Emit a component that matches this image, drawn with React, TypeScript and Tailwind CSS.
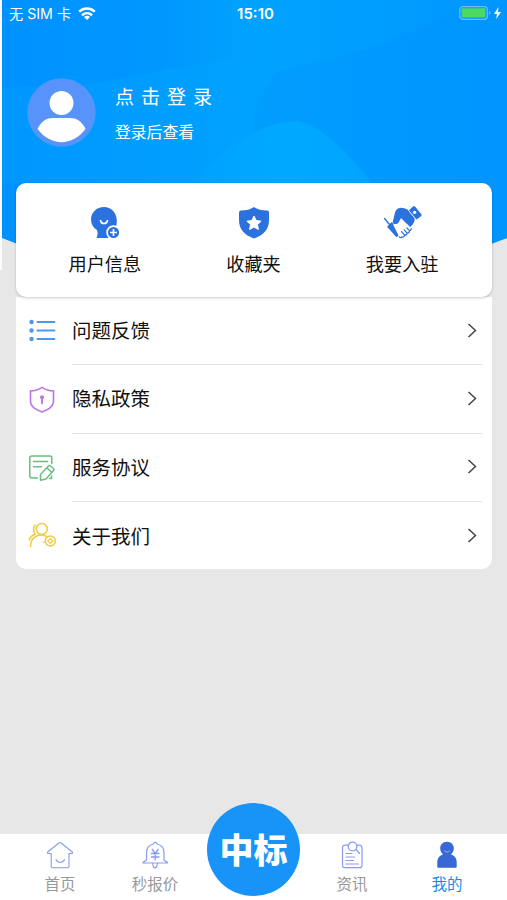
import React from 'react';

const menuItems = [
  { label: '问题反馈', icon: <ListIcon /> },
  { label: '隐私政策', icon: <PrivacyIcon /> },
  { label: '服务协议', icon: <AgreementIcon /> },
  { label: '关于我们', icon: <AboutIcon /> },
];

const shortcuts = [
  { label: '用户信息', icon: <UserInfoIcon /> },
  { label: '收藏夹', icon: <FavoriteIcon /> },
  { label: '我要入驻', icon: <HandshakeIcon /> },
];

function UserInfoIcon() {
  return (
    <svg className="h-9 w-10" viewBox="0 0 40 36">
      <path
        d="M19 3C11.500 3 6 8.500 6 15.500c0 4.500 2 8 6 10.500.900 2.500.900 5-.500 8h17V27c2.500-2 3.700-7 3.200-12C31 8 26 3 19 3Z"
        fill="#2b72df"
      />
      <path d="M15.500 16.500c.700 4 6.300 4 7 0" fill="none" stroke="#fff" strokeWidth="1.600" strokeLinecap="round" />
      <circle cx="28.500" cy="28.500" r="6.400" fill="#2b72df" stroke="#fff" strokeWidth="1.700" />
      <path d="M28.500 25v7M25 28.500h7" stroke="#fff" strokeWidth="1.700" />
    </svg>
  );
}

function FavoriteIcon() {
  return (
    <svg className="h-9 w-10" viewBox="0 0 40 36">
      <path
        d="M20 3q5 3.500 13 3.500 2 0 2 2V16c0 9-5 15-15 18.500C10 31 5 25 5 16V8.500q0-2 2-2Q15 6.500 20 3Z"
        fill="#2b72df"
      />
      <path
        d="m20 12 2.200 4.500 4.900.700-3.600 3.400.900 4.900-4.400-2.400-4.400 2.400.900-4.900-3.600-3.400 4.900-.700Z"
        fill="#fff"
        stroke="#fff"
        strokeLinejoin="round"
      />
    </svg>
  );
}

function HandshakeIcon() {
  return (
    <svg className="h-9 w-10" viewBox="0 0 40 36">
      <path d="m2.500 14.500 5 6" stroke="#2b72df" strokeWidth="1.400" strokeLinecap="round" />
      <path d="m5 22.700 4.800-4.700 9.200 11.500-4.500 3.700Z" fill="#2b72df" />
      {/* Upper hand with its cuff */}
      <path
        d="M10.800 17.500 13.200 8q1.300-3.800 5.300-4.300 4 0 7.500 2l6.800 8.500q0 5-4.800 9l-9-9-2.500 4.500q-2.500 2.500-4.500 1.300Q10.500 19.300 10.800 17.500Z"
        fill="#2b72df"
      />
      <path d="m26.700 6.500 4.300-4q1.200-1 2.200.200l6 7.300q1 1.200-.200 2.200l-4.800 3.600Z" fill="#2b72df" />
      <path d="m26.500 6.300 7.900 9.700" stroke="#fff" strokeWidth=".9" />
      <circle cx="32.600" cy="8.300" r="1.600" fill="#fff" />
      {/* Lower hand, fingers curled along the bottom */}
      <path
        d="m11 20.500 5.200-.800 3-5.300 10.300 10q.500 2.300-2 2.700 0 2.200-2.400 2.300-.200 2-2.400 2-.5 2.200-2.700 1.900-1.500 1-2.700-.300Z"
        fill="#fff"
      />
      <path
        d="m17.300 33 .300.300q1.500.800 2.400-.300 2.200.300 2.700-1.900 2.200 0 2.400-2 2.400-.100 2.400-2.300 2-.600 1.700-2.300M24.800 23.800l2.400 2.600M22.200 25.800l2.500 2.900M19.500 27.700l2.700 3"
        fill="none"
        stroke="#2b72df"
        strokeWidth="1.200"
        strokeLinecap="round"
      />
    </svg>
  );
}

function ListIcon() {
  return (
    <svg className="h-7 w-7" viewBox="0 0 28 28" fill="#4d97ed">
      <circle cx="3.500" cy="5" r="2.200" />
      <circle cx="3.500" cy="13.500" r="2.200" />
      <circle cx="3.500" cy="22" r="2.200" />
      <path d="M9.500 5h17M9.500 13.500h17M9.500 22h17" stroke="#4d97ed" strokeWidth="1.900" strokeLinecap="round" />
    </svg>
  );
}

function PrivacyIcon() {
  return (
    <svg className="h-7 w-7" viewBox="0 0 28 28" fill="none" stroke="#bd75e3" strokeWidth="1.600" strokeLinejoin="round">
      <path d="M14 1.300c3.500 2.400 7 3.500 11.500 3.500v10.700c0 5-4.500 8-11.500 10.500-7-2.500-11.500-5.500-11.500-10.500V4.800C7 4.800 10.500 3.700 14 1.300Z" />
      <circle cx="14" cy="11.200" r="2" fill="#bd75e3" stroke="none" />
      <path d="M14 12v5.300" strokeWidth="1.900" strokeLinecap="round" />
    </svg>
  );
}

function AgreementIcon() {
  return (
    <svg
      className="h-7 w-7"
      viewBox="0 0 28 28"
      fill="none"
      stroke="#66c07d"
      strokeWidth="1.500"
      strokeLinecap="round"
      strokeLinejoin="round"
    >
      <path d="M9.500 24H3.800q-2 0-2-2V4q0-2 2-2h18q2 0 2 2v5.500M5.500 7.500h14M5.500 12.800h8" />
      <path d="m12.500 20.500 8-8.500q1-1 2 0l3 2.500q1 1 0 2l-7.500 8.500-5.500 1.200ZM19 14l4.500 4M21.500 24.500h2v-2.500" />
    </svg>
  );
}

function AboutIcon() {
  return (
    <svg className="h-7 w-7" viewBox="0 0 28 28" fill="none" stroke="#efcb43" strokeWidth="1.500" strokeLinecap="round">
      <circle cx="13.800" cy="7" r="5.500" />
      <path d="M7 3c-2 3-1.500 6.500 0 9-3 1.500-5 3.500-5.800 6M2.500 24.500c0-6 3.500-10 8-11.300 3.500-.800 6 0 8 1.300" />
      <circle cx="22.300" cy="19" r="5" />
      <path d="m22.300 16.500 2.500 2.500-2.500 2.500-2.500-2.500ZM17 20h-2" strokeWidth="1.200" />
    </svg>
  );
}

function HomeIcon() {
  return (
    <svg className="h-7 w-7" viewBox="0 0 28 28" fill="none" stroke="#899bef" strokeWidth="1.100" strokeLinejoin="round">
      <path d="M13.200 1.800q.800-.700 1.600 0L26.300 11q.800 1.500-.800 1.500H23v13q0 1.200-1.300 1.200H6.500q-1.300 0-1.300-1.200v-13H2.500q-1.600 0-.8-1.500Z" />
      <path d="M10 18.500c2 4 6.500 4 8.500 0" strokeLinecap="round" />
    </svg>
  );
}

function QuoteIcon() {
  return (
    <svg className="h-7 w-7" viewBox="0 0 28 28" fill="none" stroke="#899bef" strokeWidth="1.200" strokeLinejoin="round">
      <path d="M12.500 3c.300-2.200 3.200-2.200 3.500 0 5 1 7 4.500 7 8.500V19c0 1.200 3.500 1 3.500 3H2c0-2 3.500-1.800 3.500-3v-7.500c0-4 2-7.500 7-8.500ZM11 22c.500 0 1 2 1.500 4q1.500 1.500 3 0c.5-2 1-4 1.500-4" />
      <path d="m11 8 3.200 4.500L17.500 8M10 12.500h8.500M10 16h8.500M14.200 12.500v7" strokeWidth="1.300" />
    </svg>
  );
}

function NewsIcon() {
  return (
    <svg className="h-7 w-7" viewBox="0 0 28 28" fill="none" stroke="#899bef" strokeWidth="1.200" strokeLinecap="round">
      <path d="M10 4.200H7Q4.500 4.200 4.500 6.700v17.500q0 2.500 2.500 2.500h14.500q2.500 0 2.500-2.500V6.700q0-2.500-2.500-2.500h-3" />
      <circle cx="14.500" cy="5.500" r="4.300" />
      <path d="m18 8.500 3.500 4M8 12.500h6M8 16h8.500M8 19.500h7.500M8 23h12.500" />
    </svg>
  );
}

function MineIcon() {
  return (
    <svg className="h-7 w-7" viewBox="0 0 28 28" fill="#3768d5">
      <path d="M14 .8c-4 0-6.800 2.900-6.800 6.400 0 2.700 1.200 4.800 2.900 6C6 14.800 4.300 17.500 4.300 21.500v4.300q0 1 1 1h17.400q1 0 1-1v-4.300c0-4-1.700-6.700-5.800-8.300 1.700-1.200 2.900-3.300 2.900-6C20.800 3.700 18 .8 14 .8Z" />
      <path d="M11.300 9.500c1.200 2 4.200 2 5.400 0" fill="none" stroke="#a9bff3" />
    </svg>
  );
}

interface TabItemProps {
  label: string;
  icon: React.ReactNode;
  active?: boolean;
}

function TabItem({ label, icon, active }: TabItemProps) {
  return (
    <div className="flex w-[95px] flex-col items-center pt-[7px]">
      {icon}
      <span className={`mt-1.5 text-[15.5px] leading-[20px] ${active ? 'text-[#168bf0]' : 'text-[#999]'}`}>{label}</span>
    </div>
  );
}

function StatusBar() {
  return (
    <div className="relative grid h-7 grid-cols-3 items-center pr-[6px] pl-[9px] text-white">
      <div className="flex items-center gap-[7px]">
        <span className="font-['Inter','Noto_Sans_CJK_SC',sans-serif] text-[14.2px] whitespace-nowrap">无 SIM 卡</span>
        <svg className="h-[13px] w-[18px]" viewBox="0 0 18 13" fill="none" stroke="#fff" strokeWidth="2.500">
          <path d="M1.200 4.700c4.500-4.200 11.100-4.200 15.600 0M4 8.200c3-2.700 7-2.700 10 0" />
          <path d="M9 13 6 9.900c1.600-1.500 4.400-1.500 6 0Z" fill="#fff" stroke="none" />
        </svg>
      </div>
      <span className="pl-px text-center font-['Inter',sans-serif] text-[15px] font-semibold">15:10</span>
      <div className="flex -translate-y-px items-center justify-end gap-[3px]">
        <svg className="h-[14px] w-8" viewBox="0 0 32 14">
          <rect x=".8" y=".7" width="27.500" height="12.600" rx="3" fill="none" stroke="#6cbeff" strokeWidth="1.200" />
          <rect x="2.500" y="2.300" width="24" height="9.200" rx="1" fill="#4bd964" />
          <path d="M30 5v4q1.500-.500 1.500-2T30 5" fill="#6cbeff" />
        </svg>
        <svg className="h-3 w-[7px]" viewBox="0 0 7 12" fill="#fff">
          <path d="M4.500 0 0 7h3l-.800 5L7 5H4Z" />
        </svg>
      </div>
    </div>
  );
}

export default function App() {
  return (
    <div className="flex h-[900px] w-[507px] flex-col overflow-hidden bg-[#e7e7e7] font-['Liberation_Sans','Noto_Sans_CJK_SC',sans-serif]">
      <header className="relative h-[270px] shrink-0">
        {/* Faceted blue backdrop with a rounded bottom edge */}
        <svg className="absolute inset-0 h-full w-full" viewBox="0 0 507 270">
          <defs>
            <linearGradient id="sky" x1="0" y1="0" x2="1" y2="0">
              <stop offset="0" stopColor="#0092ff" />
              <stop offset=".3" stopColor="#0097ff" />
              <stop offset=".5" stopColor="#00a2ff" />
              <stop offset=".75" stopColor="#009eff" />
              <stop offset="1" stopColor="#0096ff" />
            </linearGradient>
            <linearGradient id="facet" x1="0" y1="0" x2="1" y2="0">
              <stop offset="0" stopColor="#009eff" />
              <stop offset="1" stopColor="#0095ff" />
            </linearGradient>
            <linearGradient id="low" x1="0" y1="0" x2="1" y2="0">
              <stop offset="0" stopColor="#0097ff" />
              <stop offset="1" stopColor="#00a2ff" />
            </linearGradient>
            <linearGradient id="hill" x1="0" y1="0" x2="1" y2="0">
              <stop offset="0" stopColor="#00a1ff" />
              <stop offset=".5" stopColor="#00a9ff" />
              <stop offset="1" stopColor="#00a4ff" />
            </linearGradient>
          </defs>
          <path d="M0 0h2v270H0Z" fill="#fafdff" />
          <path d="M2 0h505v238Q253 340 2 238Z" fill="url(#sky)" />
          <path d="M2 88 90 84 254 55V183H2Z" fill="url(#low)" />
          <path d="M275 73 380 45 460 12 507 0v238l-16 5V183H254v-73Z" fill="url(#facet)" />
          <path d="M190 183Q250 121 297 121q30 5 75 62Z" fill="url(#hill)" />
        </svg>
        <StatusBar />
        <div className="relative flex items-center pt-[50px] pl-[27px]">
          <svg className="h-[69px] w-[69px]" viewBox="0 0 69 69">
            <circle cx="34.500" cy="34.500" r="33.800" fill="#5793fa" stroke="#4b9dfb" strokeWidth=".8" />
            <circle cx="34.500" cy="25" r="12" fill="#fff" />
            <path d="M10.500 51C14 43 20 40 26 40h17c6 0 12 3 15.500 11-13 17.500-35 17.500-48 0Z" fill="#fff" />
          </svg>
          <div className="ml-[19px] pt-[3px] text-white">
            <p className="text-[19px] leading-[26px] tracking-[7px]">点击登录</p>
            <p className="mt-[11px] text-[15.8px] leading-[22px]">登录后查看</p>
          </div>
        </div>
      </header>

      <main className="relative -mt-[87px] flex-1 pr-[15px] pl-4">
        <section className="relative z-10 flex h-[114px] rounded-[10px] bg-white pr-[15.5px] pl-[14.5px] shadow-[0_1px_3px_rgba(0,0,0,0.2)]">
          {shortcuts.map((item) => (
            <div key={item.label} className="flex flex-1 flex-col items-center pt-[21px]">
              {item.icon}
              <span className="mt-3 text-[18.2px] leading-[26px] text-[#111]">{item.label}</span>
            </div>
          ))}
        </section>

        <section className="h-[272px] rounded-b-[10px] bg-white pr-[10px] pl-3">
          {menuItems.map((item, i) => (
            <div key={item.label} className="flex h-[68.4px] items-center">
              {item.icon}
              <div
                className={`ml-4 flex h-full flex-1 items-center justify-between pr-1 ${
                  i < menuItems.length - 1 ? 'border-b-[1.5px] border-[#e2e2e2]' : ''
                }`}
              >
                <span className="pt-0.5 text-[19.5px] text-[#111]">{item.label}</span>
                <svg className="h-4 w-3" viewBox="0 0 12 16" fill="none" stroke="#444" strokeWidth="1.500">
                  <path d="m2.500 1 7 6.500-7 6.500" />
                </svg>
              </div>
            </div>
          ))}
        </section>
      </main>

      <nav className="flex h-[66px] shrink-0 bg-white px-[12.5px]">
        <TabItem label="首页" icon={<HomeIcon />} />
        <TabItem label="秒报价" icon={<QuoteIcon />} />
        <div className="relative z-10 -mt-[31px] flex flex-1 justify-center">
          <div className="flex h-[93px] w-[93px] shrink-0 items-center justify-center rounded-full bg-[#1893f7] pt-1 text-[34px] font-black text-white">
            中标
          </div>
        </div>
        <TabItem label="资讯" icon={<NewsIcon />} />
        <TabItem label="我的" icon={<MineIcon />} active />
      </nav>
    </div>
  );
}
